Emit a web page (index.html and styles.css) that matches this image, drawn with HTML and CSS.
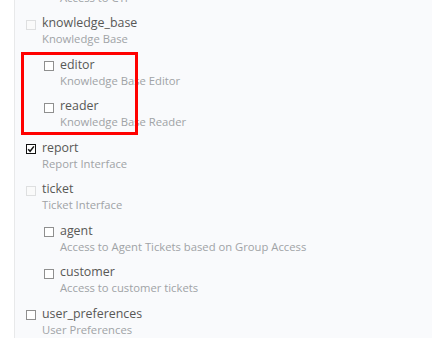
FILE: index.html
```html
<!DOCTYPE html>
<html>
<head>
<meta charset="utf-8">
<link rel="stylesheet" href="styles.css">
</head>
<body>
<div class="page">
  <div class="gutter"></div>
  <div class="panel">
    <ul class="perms">
      <li class="perm child prev">
        <span class="box"></span>
        <div class="text"><div class="name">agent</div><div class="desc">Access to CTI</div></div>
      </li>
      <li class="perm">
        <span class="box disabled"></span>
        <div class="text"><div class="name">knowledge_base</div><div class="desc">Knowledge Base</div></div>
      </li>
      <li class="group">
        <ul class="children">
          <li class="perm">
            <span class="box"></span>
            <div class="text"><div class="name">editor</div><div class="desc">Knowledge Base Editor</div></div>
          </li>
          <li class="perm">
            <span class="box"></span>
            <div class="text"><div class="name">reader</div><div class="desc">Knowledge Base Reader</div></div>
          </li>
        </ul>
      </li>
      <li class="perm">
        <svg class="box-svg" width="10" height="10" viewBox="0 0 10 10"><rect x="0.5" y="0.5" width="9" height="9" fill="#fff" stroke="#111"/><path d="M2.2 5.2 L4.1 7.3 L7.9 2.4" fill="none" stroke="#111" stroke-width="1.5"/></svg>
        <div class="text"><div class="name">report</div><div class="desc">Report Interface</div></div>
      </li>
      <li class="perm">
        <span class="box disabled"></span>
        <div class="text"><div class="name">ticket</div><div class="desc">Ticket Interface</div></div>
      </li>
      <li class="group">
        <ul class="children plain">
          <li class="perm">
            <span class="box"></span>
            <div class="text"><div class="name">agent</div><div class="desc">Access to Agent Tickets based on Group Access</div></div>
          </li>
          <li class="perm">
            <span class="box"></span>
            <div class="text"><div class="name">customer</div><div class="desc">Access to customer tickets</div></div>
          </li>
        </ul>
      </li>
      <li class="perm">
        <span class="box"></span>
        <div class="text"><div class="name">user_preferences</div><div class="desc">User Preferences</div></div>
      </li>
    </ul>
  </div>
</div>
</body>
</html>
```
FILE: styles.css
```css
html, body {
  margin: 0;
  padding: 0;
  height: 100%;
  overflow: hidden;
}
body {
  font-family: "Open Sans", "Noto Sans", sans-serif;
  background: #f9fafc;
}
.page {
  display: flex;
  height: 338px;
}
.gutter {
  width: 14px;
  background: #ffffff;
  border-right: 1px solid #e8e9ea;
  flex: none;
}
.panel {
  flex: 1;
  background: #f9fafc;
  padding-left: 11px;
}
.perms, .children {
  list-style: none;
  margin: 0;
  padding: 0;
}
.perms {
  margin-top: -26.5px;
}
.perm {
  display: flex;
  align-items: flex-start;
  gap: 6px;
  margin-bottom: 10px;
}
.prev {
  margin-left: 18px;
}
.children {
  padding-left: 18px;
  position: relative;
}
.children::after {
  content: "";
  position: absolute;
  left: -5px;
  top: -5px;
  width: 111px;
  height: 77px;
  border: 3px solid #ff0000;
}
.children.plain::after {
  display: none;
}
.box, .box-svg {
  flex: none;
  width: 10px;
  height: 10px;
  margin-top: 4.5px;
  box-sizing: border-box;
}
.box {
  border: 1px solid #8f8f8f;
  background: #fff;
}
.box.disabled {
  border-color: #dedfe0;
  background: #fafafa;
}
.name {
  font-size: 12.4px;
  line-height: 16px;
  color: #585856;
}
.desc {
  font-size: 11.25px;
  line-height: 15.5px;
  color: #a0a3a6;
}
```
